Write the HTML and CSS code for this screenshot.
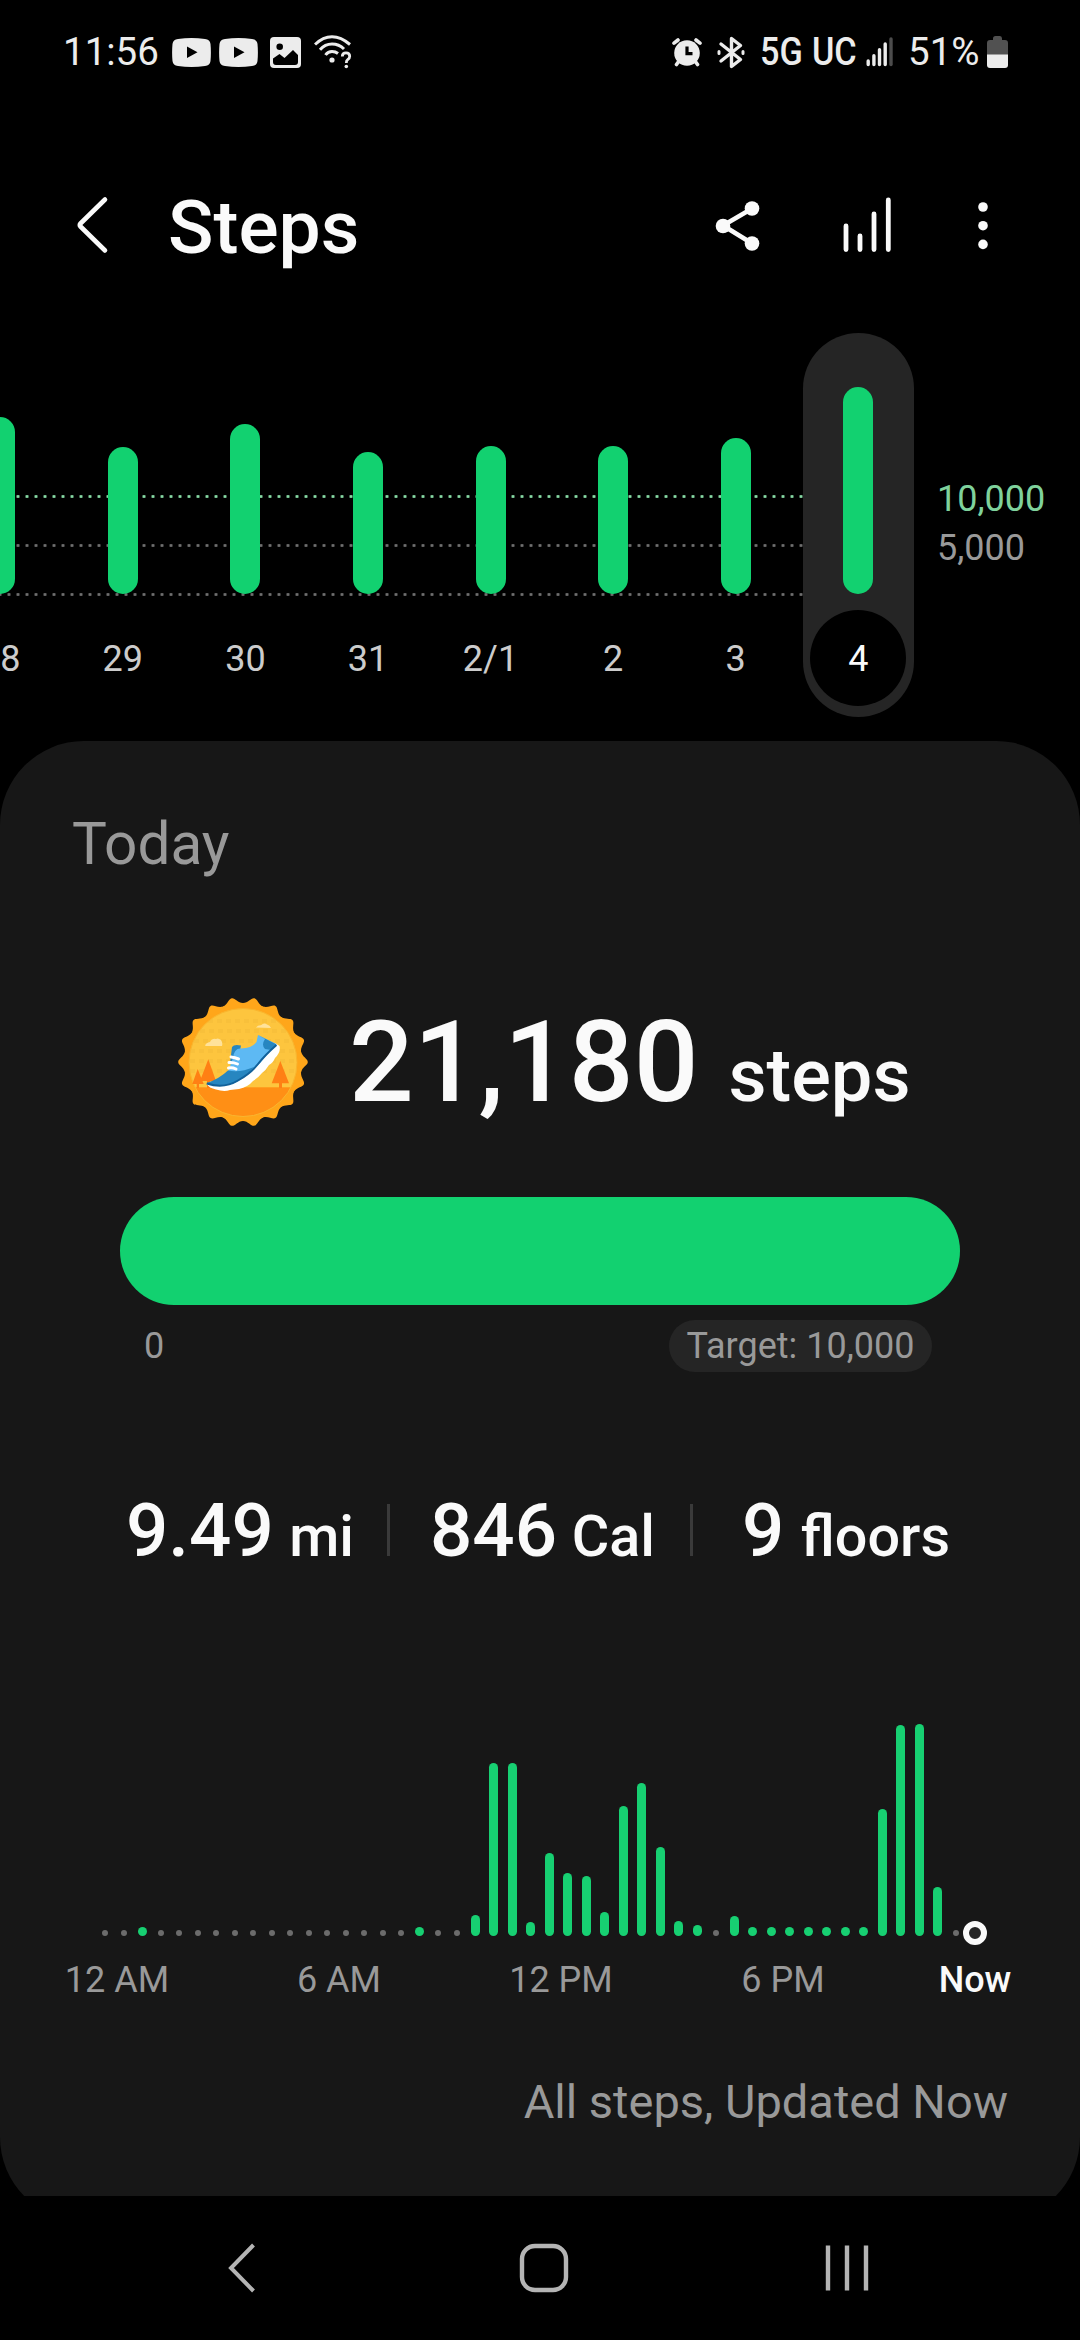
FILE: index.html
```html
<!DOCTYPE html>
<html lang="en">
<head>
<meta charset="utf-8">
<title>Steps</title>
<link rel="stylesheet" href="styles.css">
</head>
<body>
<header class="status">
  <div class="status-left">
    <span class="clock">11:56</span>
    <svg class="ic-yt" width="39" height="29" viewBox="0 0 39 29"><path fill="#ececec" fill-rule="evenodd" d="M6 1Q19.500-1 33 1Q38 1.500 38.500 6Q39.300 14.500 38.500 23Q38 27.500 33 28Q19.500 30 6 28Q1 27.500.5 23Q-.3 14.500.5 6Q1 1.500 6 1ZM15 8.500V20L25.500 14.300Z"/></svg>
    <svg class="ic-yt2" width="39" height="29" viewBox="0 0 39 29"><path fill="#ececec" fill-rule="evenodd" d="M6 1Q19.500-1 33 1Q38 1.500 38.500 6Q39.300 14.500 38.500 23Q38 27.500 33 28Q19.500 30 6 28Q1 27.500.5 23Q-.3 14.500.5 6Q1 1.500 6 1ZM15 8.500V20L25.500 14.300Z"/></svg>
    <svg class="ic-pic" width="31" height="31" viewBox="0 0 31 31"><rect width="31" height="31" rx="4" fill="#ececec"/><circle cx="9.700" cy="9.700" r="3.300"/><path d="M3 21.500L9.500 17L14.500 21L23 13L28 18V25Q28 28 25 28H6Q3 28 3 25Z"/></svg>
    <svg class="ic-wifi" width="38" height="34" viewBox="0 0 38 34" fill="none" stroke="#ececec" stroke-width="3"><path d="M1 9.500Q9 1.700 18 1.700T36 9.500M6 14.800Q11 9 18 9T30 14M11.500 20Q14 16.500 18 16.500Q21.500 16.500 24 18.500"/><circle cx="18" cy="25" r="2.600" fill="#ececec" stroke="none"/><path stroke-width="2.800" d="M28.300 21.500Q28.300 17.800 32 17.800Q35.700 17.800 35.700 21.200Q35.700 23.400 33.700 24.700Q32.300 25.700 32.300 28"/><circle cx="32.300" cy="31.500" r="1.800" fill="#ececec" stroke="none"/></svg>
  </div>
  <div class="status-right">
    <svg class="ic-alarm" width="30" height="29" viewBox="0 0 30 29"><g stroke="#ececec" stroke-width="3.600" stroke-linecap="round" fill="none"><path d="M2 5.200L6 2M28 5.200L24 2M7 23L4.500 26.500M23 23L25.500 26.500"/></g><circle cx="15" cy="15" r="12.800" fill="#ececec"/><path d="M15 8.500V15.700H20.500" fill="none" stroke="#000" stroke-width="3.200"/></svg>
    <svg class="ic-bt" width="28" height="33" viewBox="0 0 28 33" fill="none" stroke="#ececec" stroke-width="3.400" stroke-linejoin="round" stroke-linecap="round"><path d="M4 8L23.500 23.500L14.500 30.500V2.500L23.500 9.500L4 25"/><path stroke-width="3" d="M2 15.500V17.500M26 15.500V17.500"/></svg>
    <span class="net"><span class="gen">5G</span><span class="uc">UC</span></span>
    <svg class="ic-sig" width="28" height="30" viewBox="0 0 28 30" stroke="#ececec" stroke-width="3.400" stroke-linecap="round"><path d="M2.200 24V27.500M7.900 18.700V27.500M13.500 12.700V27.500M19.200 7V27.500"/><path stroke="#4c4c4c" d="M25 2V27.500"/></svg>
    <span class="pct">51%</span>
    <svg class="ic-bat" width="21" height="32" viewBox="0 0 21 32"><path fill="#515151" d="M6 4V2.500Q6 0 8.500 0H13Q15 0 15 2.500V4H18Q21 4 21 7V19H0V7Q0 4 3 4Z"/><path fill="#ececec" d="M0 18.500H21V29Q21 32 18 32H3Q0 32 0 29Z"/></svg>
  </div>
</header>

<nav class="appbar">
  <svg class="back" width="32" height="58" viewBox="0 0 32 58" fill="none" stroke="#fafafa" stroke-width="4.600" stroke-linecap="round" stroke-linejoin="round"><path d="M28 3.500L3.500 27.500Q2 29 3.500 30.500L28 54.500"/></svg>
  <h1 class="title">Steps</h1>
  <svg class="share" width="46" height="52" viewBox="0 0 46 52"><path d="M38 8L8 25.500L38 44" fill="none" stroke="#fafafa" stroke-width="4.600"/><circle cx="37" cy="8.500" r="7.300" fill="#fafafa"/><circle cx="8" cy="26" r="7.300" fill="#fafafa"/><circle cx="37" cy="43.500" r="7.300" fill="#fafafa"/></svg>
  <svg class="chart-ic" width="50" height="56" viewBox="0 0 50 56" stroke="#fafafa" stroke-width="4.800" stroke-linecap="round"><path d="M3 29V52.500M17 39V52.500M31 17V52.500M45.300 3V52.500"/></svg>
  <svg class="more" width="12" height="50" viewBox="0 0 12 50" fill="#fafafa"><circle cx="6" cy="6" r="4.800"/><circle cx="6" cy="24.700" r="4.800"/><circle cx="6" cy="43.400" r="4.800"/></svg>
</nav>

<section class="week">
  <div class="days">
    <div class="day"><div class="track"><i class="bar" style="height:177px"></i></div><span class="lbl">28</span></div>
    <div class="day"><div class="track"><i class="bar" style="height:147px"></i></div><span class="lbl">29</span></div>
    <div class="day"><div class="track"><i class="bar" style="height:170px"></i></div><span class="lbl">30</span></div>
    <div class="day"><div class="track"><i class="bar" style="height:142px"></i></div><span class="lbl">31</span></div>
    <div class="day"><div class="track"><i class="bar" style="height:148px"></i></div><span class="lbl">2/1</span></div>
    <div class="day"><div class="track"><i class="bar" style="height:148px"></i></div><span class="lbl">2</span></div>
    <div class="day"><div class="track"><i class="bar" style="height:156px"></i></div><span class="lbl">3</span></div>
    <div class="day today"><div class="track"><i class="bar" style="height:207px"></i></div><span class="lbl">4</span></div>
  </div>
  <div class="axis"><span class="goal">10,000</span><span>5,000</span></div>
</section>

<div class="viewport">
<main class="card">
  <h2 class="heading">Today</h2>
  <div class="total">
    <svg class="badge" width="130" height="130" viewBox="0 0 130 130">
      <defs>
        <path id="tooth" d="M0 0L58.100-10.200C59.300-5 64.800-3.200 64.800 0C64.800 3.200 59.300 5 58.100 10.200Z"/>
        <g id="teeth"><use href="#tooth"/><use href="#tooth" transform="rotate(20)"/><use href="#tooth" transform="rotate(40)"/><use href="#tooth" transform="rotate(60)"/><use href="#tooth" transform="rotate(80)"/><use href="#tooth" transform="rotate(100)"/></g>
        <clipPath id="disc"><circle cx="65" cy="65.500" r="54"/></clipPath>
      </defs>
      <g transform="translate(65 65)" fill="#ffa61a"><circle r="58.800"/><use href="#teeth"/><use href="#teeth" transform="rotate(120)"/><use href="#teeth" transform="rotate(240)"/></g>
      <g clip-path="url(#disc)">
        <rect width="130" height="130" fill="#fdc53e"/>
        <path stroke="#f8c03b" stroke-width="4" stroke-dasharray="5 4" d="M30 24H100M22 34H110M16 44H114M12 54H118M12 64H118M12 74H118"/>
        <rect y="90.300" width="130" height="40" fill="#ff8f15"/>
      </g>
      <circle cx="65" cy="65.500" r="54" fill="none" stroke="#f9b52e" stroke-width="1"/>
      <path fill="#ffe29a" d="M27 48.500Q28 45.500 32 45Q34 41 38 42Q40 40.500 43 43Q45 46 44 49H28ZM78 30.500Q80 28 83 28.300Q86 25 89 27.500Q92 28 93 31Z"/>
      <path fill="#ff8014" d="M30.300 62.300L38 84H32V91H29V84H22ZM19.700 72L25.700 87H21V91H18.700V87H14.300ZM102.300 64L111 86.300H104V91H101V86.300H93.700Z"/>
      <path fill="#fff" d="M28.700 87Q31 91 38 92.500Q46 95 52 93L61 92Q70 90 75 84Q80 81 84 76Q88 73 91 68Q95 66 97 61Q103 55 101.500 49L97 46L70 70L50 84Z"/>
      <path fill="#2786c0" d="M54 50Q56 47 63 48.500L61 58L52 66Z"/>
      <path fill="#5db9f3" d="M50.300 74L55 61Q56 51 63 51.500Q74 51 78.500 45L80 38L98.500 47L88 59Q76 75 62 82L40 85Z"/>
      <path fill="#2786c0" d="M28.700 86Q41 82 50 73.500Q62 76 76 70Q65 84 52 87.500Q40 90 28.700 86ZM80 38L98.500 47.500L93 53L87 52Q83 48 87 42Z"/>
      <path fill="none" stroke="#12619a" stroke-width="2" d="M28.700 86.500Q46 92 60 83.500Q73 76 80 67T98.500 48"/>
      <path fill="none" stroke="#fff" stroke-width="3" stroke-linecap="round" d="M53 60Q57 60.500 60.500 62M51 65.500Q55 65 59.500 67M50.500 71Q54 70 58 72"/>
    </svg>
    <span class="count">21,180</span><span class="unit">steps</span>
  </div>
  <div class="progress"></div>
  <div class="scale"><span>0</span><span class="target">Target: 10,000</span></div>
  <div class="stats">
    <div class="stat s1"><b>9.49</b><span>mi</span></div>
    <i class="sep"></i>
    <div class="stat s2"><b>846</b><span>Cal</span></div>
    <i class="sep"></i>
    <div class="stat s3"><b>9</b><span>floors</span></div>
  </div>
  <div class="hours">
    <i></i><i></i><i class="on" style="height:9px"></i><i></i><i></i><i></i><i></i><i></i><i></i><i></i><i></i><i></i><i></i><i></i><i></i><i></i><i></i><i class="on" style="height:9px"></i><i></i><i></i>
    <i class="on" style="height:21px"></i><i class="on" style="height:173px"></i><i class="on" style="height:173.500px"></i><i class="on" style="height:14px"></i><i class="on" style="height:83px"></i><i class="on" style="height:63.500px"></i><i class="on" style="height:60px"></i><i class="on" style="height:24.500px"></i><i class="on" style="height:130px"></i><i class="on" style="height:153.500px"></i><i class="on" style="height:89px"></i><i class="on" style="height:15px"></i><i class="on" style="height:11px"></i><i></i><i class="on" style="height:20.500px"></i>
    <i class="on" style="height:9px"></i><i class="on" style="height:9px"></i><i class="on" style="height:9px"></i><i class="on" style="height:9px"></i><i class="on" style="height:9px"></i><i class="on" style="height:9px"></i><i class="on" style="height:9px"></i>
    <i class="on" style="height:127px"></i><i class="on" style="height:211px"></i><i class="on" style="height:212px"></i><i class="on" style="height:49px"></i><i></i><i class="now"></i>
  </div>
  <div class="ticks"><span>12 AM</span><span>6 AM</span><span>12 PM</span><span>6 PM</span><span class="tick-now">Now</span></div>
  <p class="foot">All steps, Updated Now</p>
</main>
</div>

<footer class="navbar">
  <svg width="30" height="52" viewBox="0 0 30 52" fill="none" stroke="#b4b4b4" stroke-width="4"><path d="M26.500 3L4 26L26.500 49"/></svg>
  <svg width="50" height="52" viewBox="0 0 50 52" fill="none" stroke="#b4b4b4" stroke-width="4.400"><rect x="3" y="4" width="44" height="44" rx="13"/></svg>
  <svg width="46" height="52" viewBox="0 0 46 52" stroke="#b4b4b4" stroke-width="4.400"><path d="M4 3.500V48.500M23 3.500V48.500M42 3.500V48.500"/></svg>
</footer>
</body>
</html>
```
FILE: styles.css
```css
* { box-sizing: border-box; margin: 0; padding: 0; }
body {
  width: 1080px; height: 2340px; overflow: hidden;
  background: #000; color: #fafafa;
  font-family: Roboto, "Liberation Sans", sans-serif;
  display: flex; flex-direction: column;
}
svg { display: block; flex: none; }

.status { height: 104px; flex: none; display: flex; justify-content: space-between; padding: 0 72px 0 63px; color: #ececec; font-size: 38.500px; line-height: 104px; }
.status-left, .status-right { display: flex; align-items: center; }
.clock { width: 109px; }
.ic-yt2 { margin-left: 8px; }
.ic-pic { margin-left: 12px; }
.ic-wifi { margin-left: 13px; }
.ic-bt { margin-left: 15px; }
.net { width: 93px; margin-left: 15px; font-weight: 500; font-size: 38px; display: flex; justify-content: space-between; white-space: nowrap; }
.gen { transform: scaleX(.9); transform-origin: left; }
.uc { transform: scaleX(.9); transform-origin: right; }
.ic-sig { margin-left: 13px; }
.pct { margin-left: 14px; width: 79px; }

.appbar { height: 229px; flex: none; display: flex; align-items: flex-start; padding: 92px 91px 0 77px; }
.back { width: 32px; }
.title { flex: 1; margin-left: 59px; margin-top: -4px; font-size: 75px; line-height: 70px; font-weight: 500; }
.share { margin: 4px 0 0; }
.chart-ic { margin: 1px 0 0 82px; }
.more { margin: 5px 0 0 84px; }

.week { height: 408px; flex: none; display: flex; }
.days {
  width: 920px; display: flex; margin-left: -61px;
  background-image:
    radial-gradient(circle, #86d9a4 1.200px, transparent 2px),
    radial-gradient(circle, #6e6e6e 1.200px, transparent 2px),
    radial-gradient(circle, #6e6e6e 1.200px, transparent 2px);
  background-size: 9px 9px;
  background-repeat: repeat-x;
  background-position: 2.500px 159px, 2.500px 208px, 2.500px 257px;
}
.day { flex: 0 0 122.570px; display: flex; flex-direction: column; align-items: center; height: 384px; }
.track { height: 261px; display: flex; align-items: flex-end; }
.bar { width: 30px; border-radius: 15px; background: #12d170; }
.lbl { margin-top: 16px; width: 96px; height: 96px; border-radius: 50%; text-align: center; font-size: 36px; line-height: 98px; color: #ccc; }
.today { flex-basis: 111px; margin-left: 6px; border-radius: 56px; background: #252525; }
.today .lbl { background: #000; color: #fafafa; }
.axis { padding: 142px 0 0 78px; font-size: 36px; line-height: 49px; color: #999; display: flex; flex-direction: column; }
.goal { color: #7fd29c; }

.viewport { height: 1455px; flex: none; overflow: hidden; }
.card { height: 1480px; background: #171717; border-radius: 84px; }
.heading { padding: 68px 0 0 72px; font-size: 58.500px; line-height: 70px; font-weight: 400; color: #999; }
.total { margin-top: 118px; height: 130px; padding-left: 178px; display: flex; align-items: baseline; font-weight: 500; }
.badge { align-self: center; }
.count { margin-left: 41px; font-size: 114px; line-height: 130px; }
.unit { margin-left: 30px; font-size: 74px; }
.progress { width: 840px; height: 108px; margin: 70px 0 0 120px; border-radius: 54px; background: #12d170; }
.scale { display: flex; justify-content: space-between; align-items: center; margin-top: 15px; padding: 0 148px 0 144px; font-size: 36px; line-height: 53px; height: 52px; color: #999; }
.target { width: 263px; height: 52px; border-radius: 26px; background: #252525; text-align: center; }
.stats { margin-top: 131px; height: 53px; display: flex; align-items: center; font-weight: 500; }
.stat { display: flex; align-items: baseline; justify-content: space-between; white-space: nowrap; line-height: 80px; padding-top: 9px; }
.stat b { font-size: 74.500px; font-weight: 500; }
.stat span { font-size: 57.500px; }
.s1 { margin-left: 126px; width: 228px; }
.s2 { margin-left: 40px; width: 225px; }
.s3 { margin-left: 49px; width: 208px; }
.sep { width: 3px; height: 52px; background: #3a3a3a; }
.s1 + .sep { margin-left: 33px; }
.s2 + .sep { margin-left: 35px; }
.hours { height: 212px; margin: 168px 0 0 95.750px; width: 888.500px; display: grid; grid-template-columns: repeat(48, 18.510px); align-items: end; justify-items: center; }
.hours i { width: 6px; height: 6px; border-radius: 5px; background: #6c6c6c; }
.hours .on { width: 9px; background: #17d072; }
.hours .now { width: 24px; height: 24px; border: 6px solid #fafafa; border-radius: 50%; background: #252525; margin-bottom: -9px; }
.ticks { display: flex; margin: 22px 0 0 6px; font-size: 36px; line-height: 44px; color: #999; text-align: center; }
.ticks span { width: 222px; }
.ticks .tick-now { width: 162px; font-weight: 500; color: #fafafa; }
.foot { margin-top: 70px; padding-right: 72px; text-align: right; font-size: 47px; line-height: 60px; color: #999; }

.navbar { flex: 1; display: flex; padding: 46px 0 0 227px; }
.navbar svg + svg { margin-left: 262px; }
.navbar svg:last-child { margin-left: 255px; }
```
